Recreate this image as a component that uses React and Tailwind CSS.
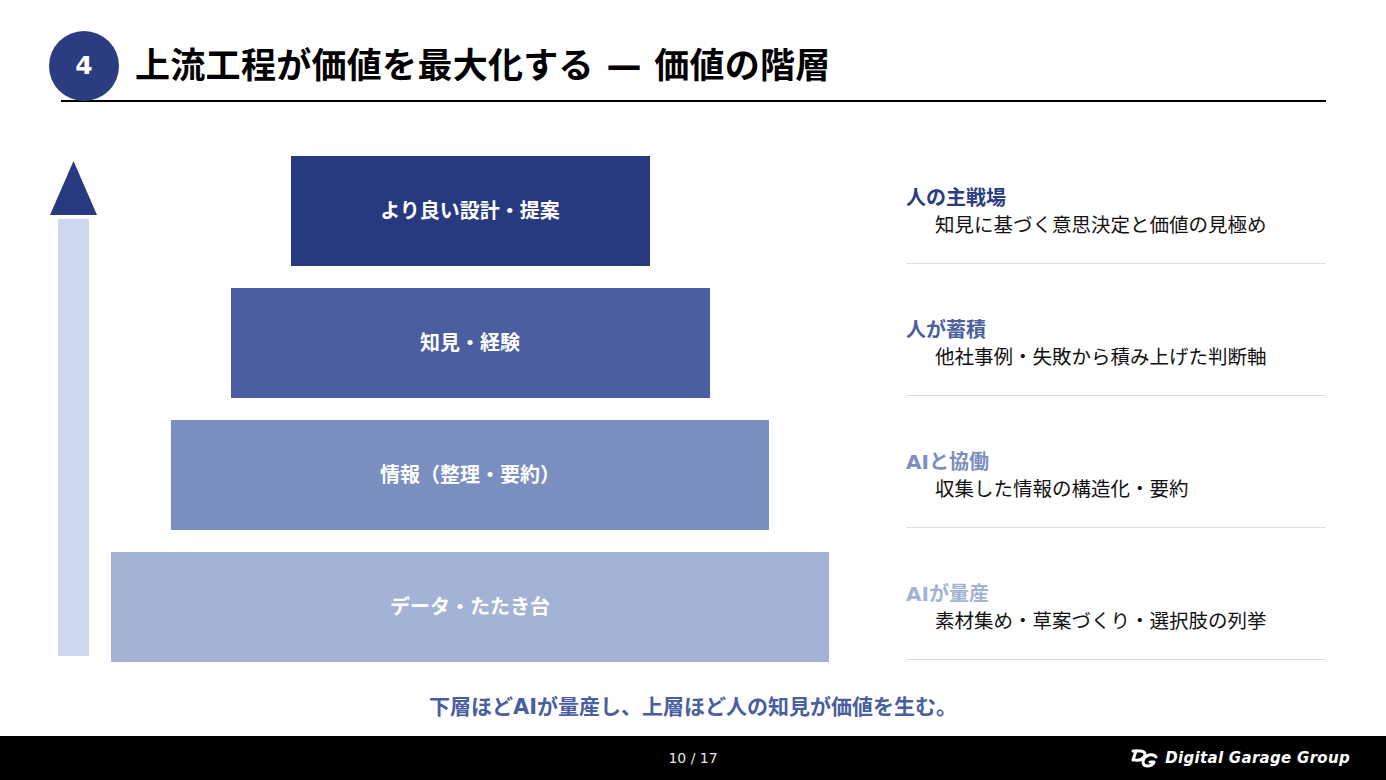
const font = { fontFamily: '"DejaVu Sans", "Noto Sans CJK JP", sans-serif' };

const tiers = [
  { label: 'より良い設計・提案', width: 'w-[359px]', bg: 'bg-[#283a7f]' },
  { label: '知見・経験', width: 'w-[479px]', bg: 'bg-[#4a5ea0]' },
  { label: '情報（整理・要約）', width: 'w-[598px]', bg: 'bg-[#7b8ec0]' },
  { label: 'データ・たたき台', width: 'w-[718px]', bg: 'bg-[#a4b2d6]' },
];

const notes = [
  { title: '人の主戦場', desc: '知見に基づく意思決定と価値の見極め', color: 'text-[#2b3c80]' },
  { title: '人が蓄積', desc: '他社事例・失敗から積み上げた判断軸', color: 'text-[#4a5ea0]' },
  { title: 'AIと協働', desc: '収集した情報の構造化・要約', color: 'text-[#7b8ec0]' },
  { title: 'AIが量産', desc: '素材集め・草案づくり・選択肢の列挙', color: 'text-[#a4b2d6]' },
];

function DGMark() {
  return (
    <svg width="30" height="22" viewBox="0 0 30 22" fill="none" stroke="white" strokeWidth="3" strokeLinecap="round" strokeLinejoin="round">
      <path d="M4 4 L12 4 Q18 5 15 10 Q12 14 6 13" />
      <path d="M7 4 L4 13" />
      <path d="M27 10 Q25 7 20 8 Q14 10 14 15 Q14 19 19 19 Q24 19 25 15 L21 15" />
    </svg>
  );
}

export default function App() {
  return (
    <div className="w-[1386px] h-[780px] bg-white flex flex-col overflow-hidden" style={font}>
      {/* header */}
      <div className="pt-[31px] ml-[61px] w-[1265px] border-b-2 border-black">
        <div className="flex items-center gap-[16px] -ml-[12px] -mb-[1px]">
          <div className="h-[70px] w-[70px] rounded-full bg-[#2b3c80] flex items-center justify-center text-white text-[25px] font-bold">
            4
          </div>
          <h1 className="text-[35px] font-bold text-black tracking-[0.3px]">上流工程が価値を最大化する — 価値の階層</h1>
        </div>
      </div>

      {/* body */}
      <div className="flex mt-[30px]">
        <div className="ml-[50px] w-[47px] pt-[29px] flex flex-col items-center">
          <svg width="47" height="54" viewBox="0 0 47 54">
            <polygon points="23.5,0 47,54 0,54" fill="#283a7f" />
          </svg>
          <div className="mt-[4px] w-[31px] h-[437px] bg-[#ccd8ee]" />
        </div>

        <div className="ml-[14px] w-[718px] pt-[24px] flex flex-col items-center gap-[22px]">
          {tiers.map((t) => (
            <div key={t.label} className={`${t.width} ${t.bg} h-[110px] flex items-center justify-center text-white text-[20px] font-bold`}>
              {t.label}
            </div>
          ))}
        </div>

        <div className="ml-[77px] w-[420px] flex flex-col">
          {notes.map((n) => (
            <div key={n.title} className="h-[132px] pt-[52px] border-b border-[#dcdcdc]">
              <div className={`${n.color} text-[20px] font-bold leading-[28px]`}>{n.title}</div>
              <div className="pl-[29px] text-[19.5px] text-[#111] leading-[28px]">{n.desc}</div>
            </div>
          ))}
        </div>
      </div>

      <p className="mt-[30px] text-center text-[21px] font-bold leading-[30px] text-[#4a5ea0]">
        下層ほどAIが量産し、上層ほど人の知見が価値を生む。
      </p>

      {/* footer */}
      <div className="mt-auto h-[44px] bg-black grid grid-cols-3 items-center">
        <div />
        <div className="text-center text-[14px] text-[#e5e5e5]">10 / 17</div>
        <div className="flex items-center justify-end gap-[6px] pr-[36px]">
          <DGMark />
          <span className="text-white text-[15px] font-bold italic tracking-[0.3px]">Digital Garage Group</span>
        </div>
      </div>
    </div>
  );
}
